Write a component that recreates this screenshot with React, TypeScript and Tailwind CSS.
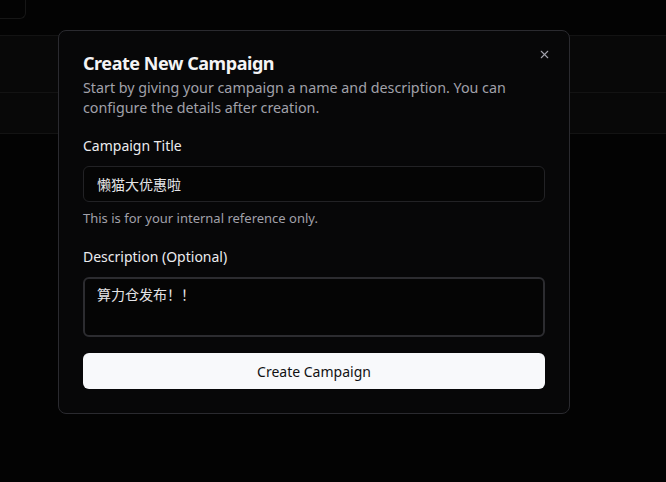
import React from "react";

export default function App() {
  const font = { fontFamily: '"Noto Sans", "Noto Sans CJK SC", sans-serif' };
  return (
    <div className="relative w-[666px] h-[482px] overflow-hidden bg-[#030303]" style={font}>
      {/* background page */}
      <div className="flex flex-col">
        <div className="h-[19px] w-[26px] rounded-br-md border-r border-b border-[#161616]" />
        <div className="h-[16px]" />
        <div className="flex flex-col bg-[#080808]">
          <div className="h-[57px] border-t border-[#131313]" />
          <div className="h-[41px] border-t border-[#131313]" />
          <div className="h-px bg-[#131313]" />
        </div>
      </div>

      {/* dialog */}
      <div className="absolute left-[58px] top-[30px] w-[512px] rounded-lg border border-[#2a2a2f] bg-[#070708] p-6 pt-[23px] text-[#fafafa]">
        <button className="absolute right-[18px] top-[17px] text-[#a1a1aa]">
          <svg width="13" height="13" viewBox="0 0 24 24" fill="none" stroke="currentColor" strokeWidth="2" strokeLinecap="round">
            <path d="M18 6 6 18" />
            <path d="m6 6 12 12" />
          </svg>
        </button>
        <h2 className="text-[18px] font-bold leading-none tracking-tight text-[#f4f4f5]">Create New Campaign</h2>
        <p className="mt-[6px] text-[14.3px] leading-5 text-[#a1a1aa]">
          Start by giving your campaign a name and description. You can configure the details after creation.
        </p>

        <label className="mt-[18px] block text-[14px] font-normal leading-5 text-[#ececef]">Campaign Title</label>
        <div className="mt-[10px] flex h-[36px] items-center rounded-md border border-[#222225] bg-[#050505] px-[13px] text-[14px] text-[#e4e4e7]">
          懒猫大优惠啦
        </div>
        <p className="mt-[6px] text-[13px] leading-5 text-[#a1a1aa]">This is for your internal reference only.</p>

        <label className="mt-[19px] block text-[14px] font-normal leading-5 text-[#ececef]">Description (Optional)</label>
        <div className="mt-[10px] h-[60px] rounded-md border-2 border-[#2c2c30] bg-[#050505] px-[12px] pt-[6px] text-[14px] leading-5 text-[#e4e4e7]">
          算力仓发布！！
        </div>

        <button className="mt-[16px] flex h-[36px] w-full items-center justify-center rounded-md bg-[#f8f9fb] text-[14px] text-[#111113]">
          Create Campaign
        </button>
      </div>
    </div>
  );
}
